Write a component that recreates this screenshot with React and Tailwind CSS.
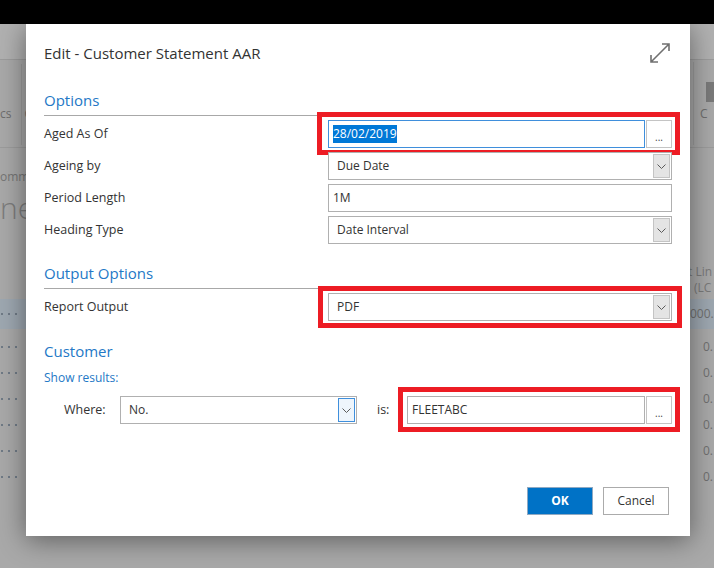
import React from "react";

const Chevron = () => (
  <svg width="9" height="5" viewBox="0 0 9 5" fill="none">
    <path d="M0.5 0.5 L4.5 4.5 L8.5 0.5" stroke="#5a5a5a" strokeWidth="1" />
  </svg>
);

const ExpandIcon = () => (
  <svg width="22" height="22" viewBox="0 0 22 22" fill="none">
    <path d="M2 20 L20 2 M13 2 H20 V9 M2 13 V20 H9" stroke="#707070" strokeWidth="1.6" />
  </svg>
);

const Select = ({ value, focused = false, className = "" }) => (
  <div
    className={`h-[28px] flex items-center border border-[#b0b0b0] bg-white pl-[8px] pr-[1px] ${className}`}
  >
    <span className="flex-1 text-[12px] text-[#333]">{value}</span>
    <div
      className={`w-[17px] h-[24px] flex items-center justify-center border ${
        focused ? "border-[#3f8fdc] bg-[#eef5fc]" : "border-[#c4c4c4] bg-[#e4e4e4]"
      }`}
    >
      <Chevron />
    </div>
  </div>
);

const Lookup = ({ children, focused = false }) => (
  <div className="flex gap-[1px] h-[28px]">
    <div
      className={`flex-1 flex items-center pl-[4px] border bg-white text-[12px] text-[#333] ${
        focused ? "border-[#3f8fdc]" : "border-[#b0b0b0]"
      }`}
    >
      {children}
    </div>
    <button className="w-[26px] border border-[#c4c4c4] bg-white text-[10px] text-[#444] leading-none pt-[6px]">
      ...
    </button>
  </div>
);

const Row = ({ label, children }) => (
  <div className="flex items-center h-[28px]">
    <div className="w-[284px] shrink-0 text-[12.5px] text-[#333]">{label}</div>
    <div className="flex-1 relative">{children}</div>
  </div>
);

const Dots = () => (
  <div className="flex gap-[5px] pl-[1px]">
    <span className="w-[2px] h-[2px] bg-[#6f7a86]" />
    <span className="w-[2px] h-[2px] bg-[#6f7a86]" />
    <span className="w-[2px] h-[2px] bg-[#6f7a86]" />
  </div>
);

const BgRow = ({ value, w = "w-[11px]", h = "h-[26px]", sel = false }) => (
  <div className={`flex justify-between items-center ${h} ${sel ? "bg-[#9ea8b1]" : ""}`}>
    <Dots />
    <span className={`${w} whitespace-nowrap text-[12px] text-[#707070]`}>{value}</span>
  </div>
);

export default function App() {
  return (
    <div className="relative w-[714px] h-[568px] overflow-hidden bg-[#a9a9a9] font-['Open_Sans',sans-serif]">
      {/* dimmed page behind the dialog */}
      <div className="h-[24px] bg-black" />
      <div className="h-[36px] bg-[#b1b1b1] border-b border-[#9c9c9c]" />
      <div className="flex justify-between h-[88px] border-b border-[#9c9c9c] text-[12px] text-[#6e6e6e]">
        <div className="flex">
          <span className="mt-[45px]">cs</span>
          <div className="w-px bg-[#9c9c9c] ml-[10px] mt-[4px] mb-[2px]" />
          <span className="mt-[45px] ml-[2px]">C</span>
        </div>
        <div className="flex">
          <span className="mt-[45px]">r</span>
          <div className="w-px bg-[#9c9c9c] ml-[8px] mt-[2px] mb-[2px]" />
          <div className="flex flex-col ml-[6px]">
            <div className="w-[8px] h-[20px] bg-[#7a7a7a] ml-[6px] mt-[22px]" />
            <span className="mt-[3px]">C</span>
          </div>
        </div>
      </div>
      <div className="text-[12px] text-[#757575] mt-[20px]">omm</div>
      <div className="text-[30px] leading-[32px] text-[#7c7c7c] mt-[6px] font-light">ne</div>
      <div className="flex justify-end text-[12px] text-[#7a7a7a] mt-[40px]">
        <div className="w-[26px] leading-[16px]">
          <div className="whitespace-nowrap">t Lin</div>
          <div className="whitespace-nowrap pl-[6px]">(LC</div>
        </div>
      </div>
      <div className="mt-[3px]">
        <BgRow value="000." w="w-[24px]" h="h-[30px]" sel />
        <div className="mt-[5px]">
          <BgRow value="0." />
          <BgRow value="0." />
          <BgRow value="0." />
          <BgRow value="0." />
          <BgRow value="0." />
          <BgRow value="0." />
        </div>
      </div>

      {/* dialog */}
      <div className="absolute left-[26px] top-[24px] w-[664px] bg-white shadow-[0_4px_26px_rgba(0,0,0,0.45)] px-[18px] pt-[16px] pb-[21px]">
        <div className="flex items-center justify-between h-[26px]">
          <h1 className="text-[15px] text-[#333]">Edit - Customer Statement AAR</h1>
          <div className="mr-[1px]">
            <ExpandIcon />
          </div>
        </div>

        <div className="mt-[24px] text-[15px] leading-[20px] text-[#2478c6] pb-[5px] border-b border-[#a8a8a8]">
          Options
        </div>
        <div className="mt-[4px] flex flex-col gap-[4px]">
          <Row label="Aged As Of">
            <Lookup focused>
              <span className="bg-[#0078d7] text-white">28/02/2019</span>
            </Lookup>
            <div className="absolute -left-[11px] -right-[8px] -top-[8px] -bottom-[7px] border-[5px] border-[#ed1c24] pointer-events-none" />
          </Row>
          <Row label="Ageing by">
            <Select value="Due Date" />
          </Row>
          <Row label="Period Length">
            <div className="h-[28px] flex items-center border border-[#b0b0b0] pl-[4px] text-[12px] text-[#333]">
              1M
            </div>
          </Row>
          <Row label="Heading Type">
            <Select value="Date Interval" />
          </Row>
        </div>

        <div className="mt-[19px] text-[15px] leading-[20px] text-[#2478c6] pb-[5px] border-b border-[#a8a8a8]">
          Output Options
        </div>
        <div className="mt-[4px]">
          <Row label="Report Output">
            <Select value="PDF" />
            <div className="absolute -left-[10px] -right-[10px] -top-[7px] -bottom-[7px] border-[5px] border-[#ed1c24] pointer-events-none" />
          </Row>
        </div>

        <div className="mt-[20px] text-[15px] leading-[20px] text-[#2478c6]">Customer</div>
        <div className="mt-[9px] text-[12px] leading-[16px] text-[#2478c6]">Show results:</div>
        <div className="mt-[10px] flex items-center pl-[20px]">
          <span className="w-[56px] text-[12.5px] text-[#333]">Where:</span>
          <Select value="No." focused className="w-[237px]" />
          <span className="ml-[20px] w-[30px] text-[12.5px] text-[#333]">is:</span>
          <div className="flex-1 relative">
            <Lookup>FLEETABC</Lookup>
            <div className="absolute -left-[9px] -right-[8px] -top-[9px] -bottom-[8px] border-[5px] border-[#ed1c24] pointer-events-none" />
          </div>
        </div>

        <div className="mt-[63px] flex justify-end gap-[10px] pr-[3px]">
          <button className="w-[66px] h-[28px] bg-[#0072c6] border border-[#8fa9c2] text-white text-[12px] font-bold">
            OK
          </button>
          <button className="w-[66px] h-[28px] bg-white border border-[#ababab] text-[#333] text-[12px]">
            Cancel
          </button>
        </div>
      </div>
    </div>
  );
}
